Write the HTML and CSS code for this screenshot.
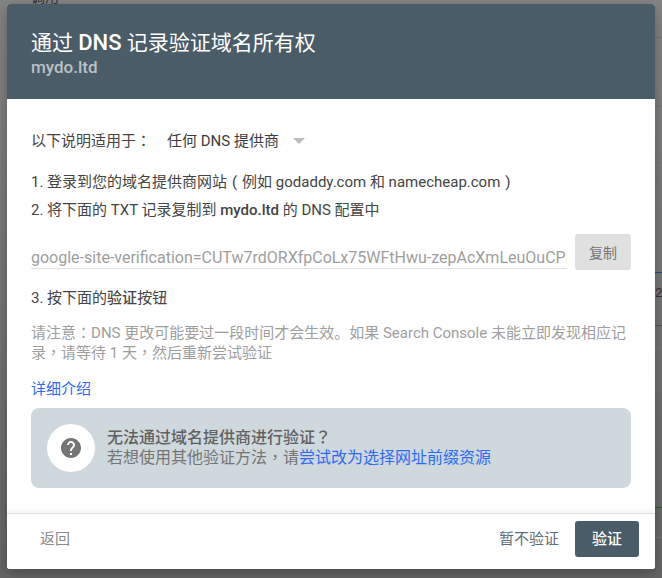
FILE: index.html
```html
<!DOCTYPE html>
<html lang="zh-CN">
<head>
<meta charset="utf-8">
<title>通过 DNS 记录验证域名所有权</title>
<link rel="stylesheet" href="styles.css">
</head>
<body>
<div class="backdrop">
  <span class="bg-text bg-top">调用</span>
  <span class="bg-line l1"></span>
  <span class="bg-line l2"></span>
  <span class="bg-line l3"></span>
  <span class="bg-line blue"></span>
  <span class="bg-text bg-num">2</span>
  <span class="bg-line l4"></span>
  <span class="bg-line l5"></span>
  <span class="bg-line green"></span>
  <span class="bg-line l6"></span>
</div>
<main class="dialog">
  <header class="head">
    <h1 class="title">通过 <b>DNS</b> 记录验证域名所有权</h1>
    <div class="domain">mydo.ltd</div>
  </header>
  <section class="body">
    <div class="selector">
      <span class="sel-label">以下说明适用于<span class="p" lang="zh-TW">：</span></span>
      <span class="sel-value">任何 DNS 提供商</span>
      <svg class="caret" width="12" height="6" viewBox="0 0 12 6"><path d="M0 0h12L6 6z" fill="#bdbdbd"/></svg>
    </div>
    <p class="step s1">1. 登录到您的域名提供商网站<span class="paren">(</span>例如 godaddy.com 和 namecheap.com<span class="paren">)</span></p>
    <p class="step s2">2. 将下面的 TXT 记录复制到 <b>mydo.ltd</b> 的 DNS 配置中</p>
    <div class="copy-row">
      <div class="record">google-site-verification=CUTw7rdORXfpCoLx75WFtHwu-zepAcXmLeuOuCPPsWk</div>
      <button class="copy">复制</button>
    </div>
    <p class="step s3">3. 按下面的<b>验证</b>按钮</p>
    <p class="note">请注意<span class="p" lang="zh-TW">：</span>DNS 更改可能要过一段时间才会生效。如果 Search Console 未能立即发现相应记录<span class="p" lang="zh-TW">，</span>请等待 1 天<span class="p" lang="zh-TW">，</span>然后重新尝试验证</p>
    <a class="more">详细介绍</a>
    <div class="help">
      <div class="help-circle">
        <svg width="24" height="24" viewBox="0 0 24 24"><path fill="#757575" d="M12 2C6.48 2 2 6.48 2 12s4.48 10 10 10 10-4.48 10-10S17.52 2 12 2zm1 17h-2v-2h2v2zm2.07-7.75-.9.92C13.45 12.9 13 13.5 13 15h-2v-.5c0-1.1.45-2.1 1.17-2.83l1.24-1.26c.37-.36.59-.86.59-1.41 0-1.1-.9-2-2-2s-2 .9-2 2H8c0-2.21 1.79-4 4-4s4 1.79 4 4c0 .88-.36 1.68-.93 2.25z"/></svg>
      </div>
      <div class="help-text">
        <div class="help-title">无法通过域名提供商进行验证<span class="p" lang="zh-TW">？</span></div>
        <div class="help-desc">若想使用其他验证方法<span class="p" lang="zh-TW">，</span>请<a class="link">尝试改为选择网址前缀资源</a></div>
      </div>
    </div>
  </section>
  <footer class="foot">
    <button class="btn back">返回</button>
    <button class="btn later">暂不验证</button>
    <button class="btn verify">验证</button>
  </footer>
</main>
</body>
</html>
```
FILE: styles.css
```css
html, body { margin: 0; height: 100%; }
body {
  width: 662px; height: 578px; overflow: hidden; position: relative;
  font-family: Roboto, "Noto Sans CJK SC", sans-serif;
  background: #7b7b7b;
  box-sizing: border-box;
  padding: 4px 7px 9px;
}
.backdrop { position: absolute; inset: 0; background: linear-gradient(#858585, #666 100%); }
.bg-text { position: absolute; color: #333; font-size: 14px; }
.bg-top { left: 31px; top: -14px; }
.bg-num { left: 655px; top: 285px; font-size: 13px; }
.bg-line { position: absolute; left: 655px; width: 7px; height: 1px; background: #777; }
.l1 { top: 37px; } .l2 { top: 106px; } .l3 { top: 162px; }
.blue { top: 272px; background: #2a4a7a; }
.l4 { top: 325px; background: #555; } .l5 { top: 348px; }
.green { top: 507px; background: #2e5a3c; } .l6 { top: 537px; }
.dialog {
  position: relative; width: 648px; height: 565px;
  display: flex; flex-direction: column; background: #fff;
  border-radius: 3px; box-shadow: 0 4px 14px rgba(0,0,0,.3);
}
.head {
  height: 95px; box-sizing: border-box; background: #4a5c67; color: #fff;
  padding: 24px 24px 0; border-radius: 3px 3px 0 0;
}
.title { margin: 0; font-size: 21px; line-height: 29px; font-weight: 400; white-space: nowrap; }
.title b { font-weight: 500; font-size: 22px; }
.domain { font-size: 17px; line-height: 22px; font-weight: 500; color: #b9c1c6; margin-top: -2px; }
.body { flex: 1; min-height: 0; padding: 0 24px; color: #444; font-size: 15px; }
.p { font-family: "Noto Sans CJK TC", sans-serif; line-height: 0; }
.paren { display: inline-block; width: 1em; text-align: center; }
.selector { display: flex; align-items: center; height: 20px; margin-top: 32px; line-height: 20px; }
.sel-label { width: 136px; }
.sel-value { color: #3c3c3c; }
.caret { margin-left: 14px; }
.step { margin: 0; line-height: 20px; white-space: nowrap; }
.step b { font-weight: 500; }
.s1 { margin-top: 21px; }
.s2 { margin-top: 8px; }
.copy-row { display: flex; align-items: flex-start; margin-top: 14px; }
.record {
  width: 536px; height: 35px; box-sizing: border-box; overflow: hidden; white-space: nowrap;
  font-size: 16px; line-height: 30px; padding-top: 9px; color: #9e9e9e; border-bottom: 1px solid #e0e0e0;
}
.copy {
  width: 56px; height: 36px; margin-left: 8px; border: 0; border-radius: 3px; padding: 0;
  background: #e0e0e0; color: #757575; font: inherit; font-size: 14px;
}
.s3 { margin-top: 18px; }
.note { margin: 15px 0 0; color: #9e9e9e; line-height: 20px; }
.more { display: block; margin-top: 16px; line-height: 20px; color: #2e6bf5; }
.help {
  display: flex; align-items: center; height: 80px; margin-top: 9px; padding-left: 16px;
  background: #cfd8dc; border-radius: 8px;
}
.help-circle {
  width: 48px; height: 48px; border-radius: 50%; background: #fff; flex: none;
  display: flex; align-items: center; justify-content: center; margin-right: 12px;
}
.help-circle svg { display: block; }
.help-text { font-size: 16px; line-height: 20px; }
.help-title { font-weight: 500; color: #616161; }
.help-desc { color: #757575; }
.link { color: #2e6bf5; }
.foot {
  height: 56px; flex: none; display: flex; align-items: center; padding: 0 24px 6px;
  border-top: 1px solid #e0e0e0; box-shadow: 0 -3px 4px rgba(0,0,0,.04); box-sizing: border-box;
  position: relative; background: #fff; border-radius: 0 0 3px 3px;
}
.btn { border: 0; background: none; font: inherit; font-size: 15px; padding: 0 0 3px; height: 36px; border-radius: 3px; }
.back { color: #8a8a8a; width: 30px; margin-left: 9px; }
.later { color: #5f6f78; margin-left: auto; width: 60px; margin-right: 16px; }
.verify { background: #4a5c67; color: #fff; width: 64px; font-weight: 500; margin-right: -8px; }
```
